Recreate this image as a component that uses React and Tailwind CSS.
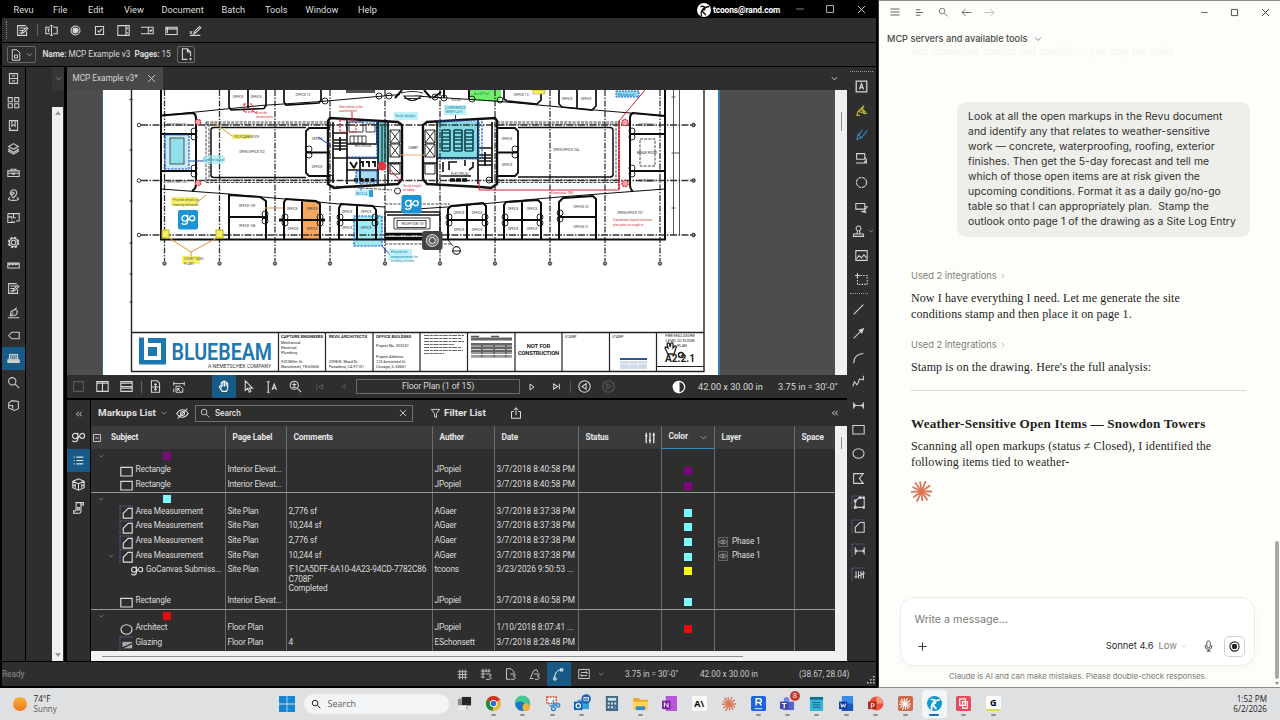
import clsx from "clsx";

// 16x16 line icons used across the Revu window
const ICONS = {
  markup: <path d="M13 9v5H2V2h10M4 5h7M4 8h5M4 11h3M7 11.5l1-2.5 5-5 1.5 1.5-5 5z" />,
  textField: <path d="M6 4H1v8h5M10 4h5v8h-5M8 2v12M6.5 2h3M6.5 14h3M3 6.5h3M4.5 6.5V10" />,
  radio: (
    <>
      <circle cx="8" cy="8" r="5.5" />
      <circle cx="8" cy="8" r="3" fill="currentColor" />
    </>
  ),
  check: <path d="M3 3h10v10H3zM5.5 8l2 2 3.5-4" />,
  listBox: <path d="M1 2h14v12H1zM11 2v12M12 5h2M12 11h2M12.5 5v1.5M12.5 10v1" />,
  combo: <path d="M0 4h15v8H9V4M0 12h9M10.5 7l1.5 2 1.7-2" />,
  button: <path d="M1 4h14v9H1zM3 4v7M1 6h14" />,
  sign: <path d="M1 14h13M6 12l1-3 6-6 1.5 1.5-6 6zM1 9l3 3M4 9l-3 3" />,
  cabinet: <path d="M3 2h10v12H3zM3 8h10M6 5h4M6 11h4" />,
  grid: <path d="M1.500 2h5v5h-5zM9.500 2h5v5h-5zM1.500 9.500h5v5h-5zM9.500 9.500h5v5h-5z" />,
  bookmark: <path d="M3 2h10v12H3zM6 2v7l2-2 2 2V2M3 12h2" />,
  layers: <path d="M8 2l6 3.5L8 9 2 5.5zM3 8l-1 1 6 4 6-4-1-1M4.5 10.5L2 11.5 8 15l6-3.5-2-1" />,
  toolbox: <path d="M1 6h14v7H1zM5 6V4h6v2M1 9h14M7 8v2h2V8" />,
  pin: <path d="M8 11C5 8 4 6.5 4 5a4 4 0 018 0c0 1.5-1 3-4 6zM8 4a1.5 1.5 0 100 2.5A1.5 1.5 0 008 4M4 10c-5 3 0 4 4 4s9-1 4-4" />,
  plan: <path d="M1 2h14v9h-4M1 2v11h5v-3M1 6h5v3M8 2v5h3M15 11v-3M6 13h3v-2" />,
  gear: (
    <>
      <circle cx="8" cy="8" r="6" strokeDasharray="2.9 1.8" strokeWidth="2.2" />
      <circle cx="8" cy="8" r="5" />
      <circle cx="8" cy="8" r="2.8" />
    </>
  ),
  ruler: <path d="M1 5h14v6H1zM3 5v3M5 5v2M7 5v3M9 5v2M11 5v3M13 5v2M1 6.5h14" />,
  pen: <path d="M1 14.5h14M4 12l1-5 5-3 3 3-2 4-5 1zM10 4l2-2M4 12l4-4" />,
  tag: <path d="M2 8l4-4h9v8H6z" />,
  stack: (
    <>
      <path d="M3 9V3h10v6M5 9V5h6v4M1 9h14M7 7h2" />
      <path d="M1 10h14v3H1z" fill="currentColor" />
    </>
  ),
  search: <path d="M6.5 2a4.5 4.5 0 100 9 4.500 4.500 0 000-9zM10 10l5 5" />,
  cube: <path d="M2 5l4-3 8 1v9l-5 2-7-3zM2 8h5v4" />,
  textBox: <path d="M1.5 1.5h13v13h-13zM5.5 11.5L8 4.5l2.5 7M6 9.5h4" strokeWidth="1.600" />,
  highlight: <path d="M2 14l2-5 7-7M4 9l8 3 3-1M11 2L9 6l4 4M6 6l6 5M2 14h4" />,
  pencil: <path d="M2 14l2-6 4-4M4 8l4 4 7-9M5 8c2-3 3-4 4-6M2 14l6-2" />,
  callout: <path d="M2 2h10v7H2zM12 6l2 3v4M1 13.5h14M11 13l3-3" />,
  cloud: <circle cx="8" cy="8" r="6.2" strokeDasharray="4 .85" />,
  callout2: <path d="M1 3h11v7H1zM12 7h3l-4 6M9 13l3-1 1 2z" />,
  stamp: <path d="M1 14h14M2 11h12v3H2zM6 11l1-4a3 3 0 112 0l1 4" />,
  image: <path d="M1 2h14v12H1zM2 12l3-4 3 3 3-4 3 4" />,
  snapshot: (
    <>
      <path d="M3 3h12v11H3z" strokeDasharray="2 1.5" />
      <path d="M3 0v6M0 3h6" />
    </>
  ),
  line: <path d="M2 14L14 2" />,
  arrow: <path d="M2 14L14 2M14 2l-5 2 3 3z" fill="currentColor" />,
  arc: <path d="M2 15C2 8 7 3 14 3" />,
  poly: <path d="M1 14l2-6 3 4 2-3 1-4 5 1V1" />,
  dim: <path d="M2 4v8M14 4v8M2 8h12M4 6L2 8l2 2M12 6l2 2-2 2" />,
  rect: <path d="M1 3h14v10.500H1z" />,
  ellipse: <ellipse cx="8" cy="8" rx="6.800" ry="5.800" />,
  polygon: <path d="M2 2h12L9 8l5 6H2z" />,
  perimeter: (
    <>
      <path d="M4 6v8h11V2H9L4 6" />
      <path d="M3 5h2v2H3zM9 1h2v2H9zM14 1h1v2h-1zM3 13h2v2H3zM14 13h1v2h-1z" fill="currentColor" />
      <path d="M0 0v16M0 0h16" stroke="#6b5fa0" strokeDasharray="1.5 1" />
    </>
  ),
  area: (
    <>
      <path d="M4 15V9l6-6h5v12z" />
      <path d="M0 0v16M0 0h16" stroke="#6b5fa0" strokeDasharray="1.5 1" />
    </>
  ),
  length: (
    <>
      <path d="M4 4v9M15 4v9M4 8.500h11M6 7L4 8.500 6 10M13 7l2 1.500-2 1.500" />
      <path d="M0 0v16M0 0h16" stroke="#6b5fa0" strokeDasharray="1.5 1" />
    </>
  ),
  count: (
    <>
      <path d="M5 4v9M8 4v9M11 4v9M14 4v9M3 11l13-5" />
      <path d="M0 0v16M0 0h16" stroke="#6b5fa0" strokeDasharray="1.5 1" />
    </>
  ),
  single: <path d="M2 2h12v12H2z" />,
  splitV: <path d="M1 2h14v12H1zM8 2v12M1 4h14" />,
  splitH: <path d="M1 2h14v12H1zM1 8h14M1 4h14M1 10h14" />,
  fitPage: <path d="M3 1h7l3 3v11H3zM8 4v9M4 8.5h8M6.5 6L8 4.500 9.500 6M6.500 11L8 12.500 9.500 11" />,
  fitWidth: <path d="M1 1v5M15 1v5M1 3.500h14M4 7h6l3 3v5H4zM1 10v5M6 10l4 4M6 13v-3h3" />,
  hand: <path d="M5 14L2 9c-1-2 1-2 2-.5V4c0-1.5 1.800-1.5 2 0V2.500c0-1.500 2-1.500 2 0V3c0-1.500 2-1.500 2 0v2c0-1.500 2-1.500 2 0v5l-1.500 4zM6 4v4M8 3v5M10 4v4" />,
  cursor: <path d="M4 1v12l3-3 2 5 2-1-2-4h4z" />,
  textSelect: <path d="M1 1h4M3 1v14M1 15h4M8 12l3-8 3 8M9 9.500h4" strokeWidth="1.500" />,
  zoom: <path d="M6.500 1.500a5 5 0 100 10 5 5 0 000-10zM10 10l5 5M4 5.500h5M6.500 3v5M4 9h5" />,
  first: <path d="M3 3v10M12 4l-6 4 6 4z" />,
  prev: <path d="M11 4L5 8l6 4z" />,
  next: <path d="M4 2l8 6-8 6z" />,
  last: <path d="M3 3.500l7 4.500-7 4.500zM13 3v10" />,
  back: <path d="M8 1a7 7 0 100 14A7 7 0 008 1zM10 4.500L5 8l5 3.500z" />,
  fwd: <path d="M8 1a7 7 0 100 14A7 7 0 008 1zM6 4.500L11 8l-5 3.500z" />,
  contrast: (
    <>
      <circle cx="8" cy="8" r="6.500" />
      <path d="M8 1.500a6.500 6.500 0 000 13z" fill="currentColor" />
    </>
  ),
  hide: <path d="M1 8c4-6 10-6 14 0-4 6-10 6-14 0zM8 5.500a2.500 2.500 0 100 5 2.500 2.500 0 000-5M2 14L14 2" />,
  eye: (
    <>
      <path d="M1 1h14v14H1z" strokeWidth=".8" />
      <path d="M2 8c3-4 9-4 12 0-3 4-9 4-12 0z" />
      <circle cx="8" cy="8" r="1.500" />
    </>
  ),
  close: <path d="M3 3l10 10M13 3L3 13" />,
  down: <path d="M2 5l6 6 6-6" />,
  funnel: <path d="M2 2h12L9.500 8v6l-3-1.500V8z" />,
  share: <path d="M5 6H2v9h12V6h-3M8 11V1M5 4l3-3 3 3" />,
  collapse: <path d="M7.500 3.500L3 8l4.500 4.500M13.500 3.500L9 8l4.500 4.500" strokeWidth="1.800" />,
  list: <path d="M5 3h10M5 8h10M5 13h10M1 3h1.500M1 8h1.500M1 13h1.500" />,
  box3d: <path d="M1 4l7-3 7 3v8l-7 3-7-3zM1 4l7 3 7-3M8 7v8M4 7v5M12 7v5M1 9h3M12 9h3" />,
  scroll: <path d="M5 2h9v3h-3v8c0 2-2 2-2 2H2v-3h3zM7 8h2v3H7zM11 5V2" />,
  minusBox: <path d="M1 1h14v14H1zM4.500 8h7" strokeWidth="1.600" />,
  sliders: <path d="M3 1v14M8 1v14M13 1v14M1.500 5h3M6.500 11h3M11.500 4h3" strokeWidth="1.800" />,
  hash: <path d="M1 4h14M1 8h14M1 12h14M4 1v14M8 1v14M12 1v14" />,
  snapGrid: <path d="M1 4h13M1 8h6M1 12h5M4 1v13M8 1v5M12 1v5M8 8h5c3 0 2 3-1 3 3 0 4 4 0 4H8" />,
  snapPage: <path d="M7 15H2V1h6l4 4v2M7 8h5c3 0 2 3-1 3 3 0 4 4 0 4H8" />,
  snapMark: <path d="M1 14h5M2 13L6 4l4-2 2 4M7 8h5c3 0 2 3-1 3 3 0 4 4 0 4H8" />,
  curve: <path d="M1 13h3v3H1zM2 12C3 6 6 3 11 2M10 1h3v3h-3z" />,
  sync: <path d="M1 2h14v12H1zM4 6h8l-2-2M12 6v2M12 10H4l2 2M4 10V8" />,
  docPage: <path d="M3 1h6l4 4v10H3zM6 8h4v4H6z" />,
  addPage: <path d="M9 14H3V1h6l4 4v5M9 1v4h4M13 12v3M11.500 13.500h3" />,
  glazing: (
    <>
      <path d="M3 6h12v8H3z" fill="#aaa" stroke="none" />
      <path d="M2 14L15 8" stroke="#222" />
      <path d="M0 0v16M0 0h16" stroke="#6b5fa0" strokeDasharray="1.5 1" />
    </>
  ),
  min: <path d="M2 8h12" />,
  max: <path d="M2.500 2.500h11v11h-11z" />,
};

function Icon({ name, className, sw = 1.3 }) {
  return (
    <svg
      viewBox="0 0 16 16"
      className={clsx("shrink-0 overflow-visible", className)}
      fill="none"
      stroke="currentColor"
      strokeWidth={sw}
    >
      {ICONS[name]}
    </svg>
  );
}

const GO_PATH =
  "M8.2 2v7.5c0 4.5-6 4.5-6.5 2M8.2 5.5a3.3 3.3 0 10-.2 2C9.5 10 10.2 3 13.5 3a3 3 0 110 6c-2 0-2.6-1.4-3.4-2.5";

function GoMark({ className, sw = 1.6 }) {
  return (
    <svg viewBox="0 0 18 16" className={className} fill="none" stroke="currentColor" strokeWidth={sw}>
      <path d={GO_PATH} />
    </svg>
  );
}

const MENU = [
  ["Revu", "w-[39.5px]"],
  ["File", "w-[35px]"],
  ["Edit", "w-[36px]"],
  ["View", "w-[37.5px]"],
  ["Document", "w-[60px]"],
  ["Batch", "w-[43.5px]"],
  ["Tools", "w-[40.5px]"],
  ["Window", "w-[52.5px]"],
  ["Help", "w-[30px]"],
];

function MenuBar() {
  return (
    <div className="flex h-[18px] shrink-0 items-center bg-black pl-[13.5px] text-[9.2px] text-[#dedede]">
      {MENU.map(([label, width]) => (
        <span key={label} className={clsx("mt-[1.5px]", width)}>
          {label}
        </span>
      ))}
      <div className="ml-[309px] flex items-center">
        <svg viewBox="0 0 16 16" className="mt-px size-[14px]">
          <circle cx="8" cy="8" r="8" fill="#fff" />
          <path d="M5 15c-1-6 1-10 9-11M4 4c4-1 6 1 5 3s-3 1-3 2 3 3 4 5" fill="none" stroke="#111" strokeWidth="1.6" />
        </svg>
        <span className="ml-[2px] mt-[2px] w-[67px] whitespace-nowrap text-[8.4px] font-bold tracking-[-0.1px] text-white">
          tcoons@rand.com
        </span>
        <Icon name="min" className="ml-[15px] size-[10px]" sw={1} />
        <Icon name="max" className="ml-[20px] size-[10px]" />
        <Icon name="close" className="ml-[21px] size-[11px]" />
      </div>
    </div>
  );
}

function FormToolbar() {
  const tools = ["textField", "radio", "check", "listBox", "combo", "button", "sign"];
  return (
    <div className="flex h-[24px] shrink-0 items-center bg-[#2e2e2e] pl-[4px] text-[#d6d6d6]">
      <div className="h-[18px] w-0 border-l border-dotted border-[#8a8a8a]" />
      <Icon name="markup" className="ml-[9px] size-[13px]" />
      <div className="ml-[8px] h-[12px] w-px bg-[#666]" />
      <div className="ml-[1.5px] flex">
        {tools.map((t) => (
          <div key={t} className="flex w-[24px] justify-center">
            <Icon name={t} className="size-[13px]" />
          </div>
        ))}
      </div>
    </div>
  );
}

function NameBar() {
  return (
    <div className="mt-px flex h-[23px] shrink-0 items-center bg-[#2e2e2e] pl-[5px] text-[8.3px] text-[#d8d8d8]">
      <div className="flex h-[17px] w-[29px] items-center justify-between rounded-[2px] border border-[#696969] px-[2px]">
        <Icon name="docPage" className="size-[12px]" />
        <Icon name="down" className="size-[7px]" />
      </div>
      <span className="ml-[6.5px] w-[92px] whitespace-nowrap tracking-[-0.05px]">
        <b>Name:</b> MCP Example v3
      </span>
      <span className="w-[42.5px] whitespace-nowrap tracking-[-0.1px]">
        <b>Pages:</b> 15
      </span>
      <div className="flex h-[17px] w-[18px] items-center justify-center rounded-[2px] border border-[#696969]">
        <Icon name="addPage" className="size-[13px]" />
      </div>
    </div>
  );
}

function LeftRail() {
  const items = [
    "cabinet", "grid", "bookmark", "layers", "toolbox", "pin", "plan", "gear",
    "ruler", "markup", "pen", "tag", "stack", "search", "cube",
  ];
  return (
    <div className="flex w-[23px] shrink-0 flex-col bg-[#2e2e2e] text-[#cfcfcf]">
      {items.map((n) => (
        <div
          key={n}
          className={clsx("flex h-[23.35px] shrink-0 items-center justify-center", n === "stack" && "bg-[#175a85]")}
        >
          <Icon name={n} className="size-[13px]" />
        </div>
      ))}
    </div>
  );
}

function SidePanel() {
  return (
    <div className="ml-px flex w-[38px] shrink-0 bg-[#2e2e2e]">
      <div className="w-[26px]" />
      <div className="flex w-[12px] flex-col">
        <div className="flex h-[23px] items-center justify-center bg-[#363636] text-[#bbb]">
          <Icon name="down" className="size-[7px]" />
        </div>
        <div className="mt-[17px] flex w-[11px] grow flex-col items-center justify-between bg-[#f0f0f0] py-1">
          <div className="size-0 border-x-[3px] border-b-[4px] border-x-transparent border-b-[#9a9a9a]" />
          <div className="size-0 border-x-[3px] border-t-[4px] border-x-transparent border-t-[#9a9a9a]" />
        </div>
      </div>
    </div>
  );
}

const GRID_X = [164.5, 219.5, 275, 330, 385, 440, 495, 550, 605, 660];
const DOORS = [
  [194, 131], [194, 137], [194, 168], [194, 174], [265, 214], [265, 221], [285, 217], [285, 223],
  [320, 217], [320, 223], [340, 217], [340, 223], [375, 217], [375, 223], [309, 149], [309, 155],
  [449, 217], [449, 223], [485, 217], [485, 223], [505, 217], [505, 223], [540, 217], [540, 223],
  [560, 213], [560, 219], [515, 149], [515, 155], [632, 131], [632, 137], [632, 168], [632, 174],
  [325, 101], [379, 96], [389, 96], [435, 97], [444, 98], [472, 99], [500, 100], [330, 178], [489, 180],
];
const LABELS = [
  [177, 126, "MEETING 101"], [177, 183, "MEETING 103"], [252, 153, "OPEN OFFICE 102"], [317, 140, "OFFICE"],
  [317, 168, "OFFICE"], [247, 207, "OFFICE 109"], [247, 227, "OFFICE 108"], [292, 210, "OFFICE"],
  [312, 210, "OFFICE"], [293, 230, "OFFICE"], [312, 230, "OFFICE"], [347, 213, "OFFICE"],
  [366, 213, "OFFICE"], [347, 229, "OFFICE"], [366, 229, "OFFICE"], [238, 98, "OFFICE"],
  [256, 98, "OFFICE"], [303, 96, "OFFICE 12"], [413, 149, "LOBBY"], [507, 140, "OFFICE"],
  [507, 166, "OFFICE"], [566, 151, "OPEN OFFICE 104"], [647, 154, "BREAK ROOM"], [647, 126, "STORAGE 2"],
  [647, 182, "STORAGE 3"], [630, 214, "OPEN OFFICE 107"], [581, 208, "OFFICE 20"], [581, 228, "OFFICE 21"],
  [459, 214, "OFFICE"], [477, 214, "OFFICE"], [459, 231, "OFFICE"], [477, 231, "OFFICE"], [513, 210, "OFFICE"],
  [532, 210, "OFFICE"], [513, 230, "OFFICE"], [532, 230, "OFFICE"], [521, 96, "OFFICE 13"], [567, 100, "OFFICE"],
  [586, 100, "OFFICE"], [456, 101, "ROOM"], [460, 175, "ELECTRICAL"], [363, 147, "RESTROOM"],
];

// lines of markup notes: x, y, colour, text
const NOTES = [
  [234, 138, "#555", "POLYCARB ROOF"],
  [173, 201, "#555", "Provide details on"],
  [173, 205.5, "#555", "framing elevation"],
  [184, 260, "#555", "COURT YARD"],
  [184, 264.5, "#555", "PLANT"],
  [256, 113.5, "#d4303c", "Provide"],
  [256, 118, "#d4303c", "dimensions"],
  [339, 107.5, "#d4303c", "Stair detail to be"],
  [339, 112, "#d4303c", "coordinated"],
  [203, 161, "#17829c", "Confirm layout"],
  [445, 108.5, "#17829c", "CONFERENCE"],
  [445, 113, "#17829c", "VERIFY A/V"],
  [395, 117, "#17829c", "Verify skylight"],
  [356, 195, "#1672b4", "RFI 014"],
  [618, 95.5, "#1672b4", "Waterproof"],
  [391, 253, "#17829c", "Provide fixt"],
  [391, 257.5, "#17829c", "measurements for"],
  [391, 262, "#17829c", "existing counter"],
  [403, 186.5, "#d4303c", "Verify height"],
  [403, 191, "#d4303c", "at lobby"],
  [551, 194, "#d4303c", "Dimension TBD"],
  [613, 221, "#d4303c", "Coordinate layout furniture"],
  [613, 225.5, "#d4303c", "plan prior to rough-in"],
  [474, 94.5, "#17722a", "A = 377 sf"],
];

function Core() {
  return (
    <g fill="none" stroke="#111" strokeWidth="1">
      <path d="M328 121l2-3 68 4 4 3v54l-4 5-54 3-10 1-6-4z" strokeWidth="2.4" />
      <path d="M333 122v61M347 118v66M378 120v65M388 122v62M333 133h14M347 144h30v-22M333 158h45M360 158v22M347 170h31M388 163h14" strokeWidth="1.7" />
      <path d="M349 122h14v10h-14zM366 124h9v8h-9zM350 136h16v7h-16zM354 136v7M358 136v7M362 136v7" strokeWidth=".8" />
      <path d="M334 140h12M334 143h12M334 146h12M334 149h12M340 137v14" strokeWidth="1.7" />
      <path d="M390 130h10v13h-10zl10 13M400 130l-10 13M390 144h10v13h-10zl10 13M400 144l-10 13M390 164h10v10h-10zl10 10" strokeWidth=".9" />
      <path d="M360 162h3v5M366 162h3v5M372 162h3v5M350 162l4 6M357 162l-3 6" strokeWidth="1.8" />
      <path d="M354 180h22" strokeWidth="3.4" strokeDasharray="4 1.5" />
      <path d="M382 124v38M385 124v38" strokeWidth="1.4" stroke="#1f4c50" />
    </g>
  );
}

function FloorPlan() {
  return (
    <svg viewBox="103 90 615 285" className="h-[285px] w-[615px] shrink-0 bg-white" fontFamily="Roboto, sans-serif">
      {/* sheet frame */}
      <g fill="none" stroke="#222">
        <path d="M131.5 90v281.5H704V90M131.5 332.5H704" strokeWidth="1.4" />
        <path d="M129.5 99.5h3M129.5 150h3M129.5 201h3M129.5 243h3M129.5 274h3M129.5 302h3" strokeWidth="1" />
        <path d="M673.5 90v145M679.5 90v145M671.500 97h4M671.500 153h8M671.500 208h4" stroke="#555" strokeWidth="1" />
      </g>

      {/* fills under the linework */}
      <rect x="165" y="135" width="24" height="34" fill="#c4ecf7" />
      <rect x="170" y="138" width="14" height="26" fill="#8fe0ea" />
      <rect x="303" y="201" width="17" height="38" fill="#f4a860" />
      <rect x="354" y="216" width="28" height="30" fill="#7fe3f0" opacity=".75" />
      <rect x="438" y="122" width="40" height="36" fill="#7fdbe6" />
      <path d="M378 121h10v42h-10z" fill="#6fc5c8" />
      <path d="M469 90h32v8l-4 4-26-2z" fill="#6ff06c" />
      <rect x="356" y="171" width="21" height="12" fill="#a6dcf7" />

      {/* column grid */}
      <g stroke="#333" fill="none">
        {GRID_X.map((x) => (
          <g key={x}>
            <path d={`M${x} 90V261`} strokeDasharray="6 1.5 1.5 1.5" strokeWidth="1.3" />
            <circle cx={x} cy="263.5" r="1.7" fill="#999" />
          </g>
        ))}
        {[125, 180.5, 235].map((y) => (
          <g key={y}>
            <path d={`M141 ${y}H692`} strokeDasharray="7 1.5 1.5 1.5" strokeWidth="1.3" />
            <circle cx="139" cy={y} r="1.8" />
            <circle cx="693.5" cy={y} r="1.8" fill="#777" />
          </g>
        ))}
      </g>

      {/* exterior and party walls */}
      <g fill="none" stroke="#0c0c0c" strokeWidth="2">
        <path d="M161 90v149.5h504V90" />
        <path d="M161 115.5l32-2.5q3 1 3 5v66q0 5-4 7M161 134h34M161 171h35" />
        <path d="M665 116l-32-3q-3 1-3 5v66q0 6 3 7M665 134h-34M665 171h-35" />
        <path d="M161 189l68 5 56 5 54 5 46 3M665 189l-106 8-56 5-56 5-46 3M161 115.5l100-10 60-4 79-7M665 116l-105-9-65-6-80-5" strokeWidth="1" />
        <path d="M229 90v17l2 3 33-1.5 2-3V90M248 90v18" strokeWidth="1.7" />
        <path d="M284 90v12l2 3 33-2 2-3V90" strokeWidth="1.7" />
        <path d="M559 90v14l3 3 30 3 4-4V90M577 90v18" strokeWidth="1.7" />
        <path d="M504 90v9l3 2 30 3 4-4V90" strokeWidth="1.7" />
        <path d="M433 98l8-6M444 90v8M469 90v9M395 98l7-8M424 90l7 8" />
        <path d="M211 130q0-2.5 3-2.5h92M211 130v45q0 2.5 3 2.5h92" strokeWidth="1.5" />
        <path d="M330 128h-21l-3 3v42l3 3h21M306 152.5h24" strokeWidth="1.8" />
        <path d="M518 127.5h92q3 0 3 3v44q0 2.5-3 2.5h-92" strokeWidth="1.5" />
        <path d="M497 128h18l3 3v42l-3 3h-18M497 152.5h21" strokeWidth="1.8" />
        <path d="M229 239v-44l31 2 6 4v38M229 217h37" />
        <path d="M284 239v-37l2-3 30 2 4 3v35M302 200v39M284 220h36" />
        <path d="M339 239v-31l2-4 32 2 3 4v29M357 205v34M339 220h37" />
        <path d="M448 239v-30l3-3 32-3 3 3v33M467 205v34M448 220h38" />
        <path d="M504 239v-34l2-3 32-2 3 3v36M522 201v38M504 220h37" />
        <path d="M559 239v-37l4-4 30-2 3 3v40M559 217h37" />
        <path d="M385 239v-27h55v27M387 215h53" strokeWidth="1.3" />
        <path d="M385 234h37M385 238h37" strokeWidth="2.6" />
        <path d="M394 218h36v11h-36zM397 220.500h29v7h-29z" strokeWidth=".8" />
      </g>
      <g fill="none" stroke="#333" strokeWidth=".9" strokeDasharray="3 1.2">
        <path d="M206 122h124M206 124h124M206 182.5h124M206 180h124M206 122v60M209 124v57M497 122h122M497 124h122M497 182.5h122M497 180h122M619 122v60M616 124v57" />
        <path d="M332 186l60 4M385 204h65M385 244h67M640 139h15v27h-15z" />
      </g>
      <rect x="170" y="138" width="14" height="26" fill="none" stroke="#333" strokeWidth=".8" />
      <path d="M346 90h29v3h-29z" fill="#555" />
      <path d="M404 96q8 9 17 0z" fill="#fff" stroke="#222" strokeWidth="1.2" />
      <path d="M404 98.500h17M401 93q12-3 22 0" fill="none" stroke="#222" strokeWidth="1.2" />

      <Core />
      {/* the east core is the west one mirrored, with its own fittings */}
      <g transform="translate(825 0) scale(-1 1)">
        <g fill="none" stroke="#111" strokeWidth="1">
          <path d="M328 121l2-3 68 4 4 3v54l-4 5-54 3-10 1-6-4z" strokeWidth="2.4" />
          <path d="M333 122v61M347 118v66M388 122v62M333 148h14M347 158h41M333 165h14M388 163h14" strokeWidth="1.7" />
          <path d="M390 130h10v13h-10zl10 13M400 130l-10 13M390 144h10v13h-10zl10 13M400 144l-10 13M390 164h10v10h-10z" strokeWidth=".9" />
          <path d="M334 155h12M334 158h12M334 161h12M340 152v14" strokeWidth="1.7" />
          <path d="M352 162v5l4 3M360 160v6M368 162h8v8M382 162v10M384 176h-30" strokeWidth="1.6" />
          <path d="M358 180h18" strokeWidth="3.4" strokeDasharray="5 1" />
        </g>
      </g>
      {/* conference seating */}
      <g stroke="#174a52" strokeWidth="1.7" fill="none">
        {[442, 454, 465].map((x) => (
          <path key={x} d={`M${x} 130h8M${x} 133h8M${x} 137h8M${x} 140h8M${x} 144h8M${x} 148h8M${x} 151h8M${x} 130v21M${x + 8} 130v21`} />
        ))}
      </g>

      <g fill="none" stroke="#111" strokeWidth=".9">
        {DOORS.map(([x, y]) => (
          <circle key={`${x}-${y}`} cx={x} cy={y} r="3" />
        ))}
        <path d="M262 217.5h6M284 220h-5M320 220h5" strokeWidth="3" />
      </g>

      <g fontSize="3.2" textAnchor="middle" fill="#333">
        {LABELS.map(([x, y, t]) => (
          <text key={`${x}-${y}`} x={x} y={y}>{t}</text>
        ))}
        <text x="413" y="225">RECEPTION 101</text>
      </g>

      {/* markups */}
      <g fill="none" stroke="#1f5fd0" strokeWidth="1.2" strokeDasharray="2.5 1">
        <rect x="165" y="135" width="24" height="34" />
        <rect x="354" y="216" width="28" height="30" />
        <path d="M348 122h29v35h-29M438 121h41v38h-41M482 121v38" />
        <rect x="356" y="171" width="21" height="12" />
      </g>
      <g fill="none" stroke="#d4202f" strokeWidth="1.1">
        <circle cx="198" cy="122" r="2.8" fill="#f5a3a8" strokeDasharray="2 .8" />
        <circle cx="198" cy="183" r="2.8" fill="#f5a3a8" strokeDasharray="2 .8" />
        <circle cx="625" cy="122.5" r="3.2" fill="#f5a3a8" strokeDasharray="2 .8" />
        <circle cx="625" cy="183.5" r="3.2" fill="#f5a3a8" strokeDasharray="2 .8" />
        <path d="M645 90l-26 31v69H479v-10M352 112v9M252 110l5 4" strokeWidth="1" />
        <path d="M619 121v69" strokeDasharray="2 1" strokeWidth="1.8" />
        <path d="M244 104h8v8h-8z" strokeDasharray="2 1" />
        <path d="M340 120h16v12h-16zM388 168l14 14" strokeDasharray="2 1" />
      </g>
      <circle cx="382" cy="166" r="4.500" fill="#e43442" />
      <path d="M190 161h14" stroke="#1c4da0" strokeWidth="1" />
      <path d="M318 137l13 9M455.5 115v6M361 183v8M382 246l8 9" stroke="#2a34b8" strokeWidth="1" />
      <path d="M265 208h18" stroke="#e0a050" strokeWidth="1" />
      <path d="M400 155h24" stroke="#e8a860" strokeWidth=".9" />

      <g fill="#f5f06a">
        <rect x="232" y="134" width="20" height="5" />
        <rect x="171" y="197" width="27" height="9" />
        <rect x="182" y="256" width="18" height="8" />
        <rect x="162" y="230" width="7" height="8" stroke="#c9b400" />
        <rect x="216" y="230" width="7" height="8" stroke="#c9b400" />
        <rect x="533" y="90" width="12" height="4" stroke="#c9a400" strokeWidth=".6" />
      </g>
      <path d="M213 122l19 14M206 195l-10 8M169 238l22 14 26-14M191 252v4" fill="none" stroke="#d79b2c" strokeWidth="1" />
      <g fill="#9cebf5" opacity=".65">
        <rect x="203" y="155" width="22" height="9" rx="4" />
        <rect x="444" y="105" width="22" height="10" />
        <rect x="355" y="190" width="14" height="6" />
        <rect x="388" y="249" width="24" height="11" />
        <rect x="394" y="112" width="24" height="8" />
      </g>
      <rect x="616" y="91" width="23" height="6" fill="#8cd8f2" stroke="#2460c0" strokeDasharray="2 1" />
      <g fontSize="3.3">
        {NOTES.map(([x, y, fill, t]) => (
          <text key={t} x={x} y={y} fill={fill}>{t}</text>
        ))}
      </g>
      <path d="M369 190h4v7h-4z" fill="#2c9be0" />

      {/* GoCanvas and camera stamps */}
      {[[178, 210, 20, 19.5], [401.5, 195, 20, 18.5]].map(([x, y, w, h]) => (
        <g key={x}>
          <rect x={x} y={y} width={w} height={h} rx="2" fill="#1b93d4" />
          <path
            d={GO_PATH}
            transform={`translate(${x + 2.5} ${y + 3}) scale(.86)`}
            fill="none"
            stroke="#fff"
            strokeWidth="1.6"
          />
        </g>
      ))}
      <rect x="422" y="231" width="20.5" height="19" rx="3" fill="#444" />
      <circle cx="432.300" cy="240.5" r="6" fill="#777" stroke="#ddd" />
      <circle cx="432.300" cy="240.5" r="3" fill="#555" stroke="#eee" />
      <path d="M448 240l5 6M452 251h9" stroke="#222" />
      <circle cx="456.5" cy="250.5" r="3.8" fill="none" stroke="#222" strokeWidth="1.2" />
      <circle cx="397.5" cy="191" r="3" fill="none" stroke="#222" />

      {/* title block */}
      <path
        d="M278.5 332.500v39M325.500 332.500v39M373 332.500v39M420 332.500v39M467.500 332.500v39M515 332.500v39M562 332.500v39M609.500 332.500v39M656.500 332.500v39M656.500 366.500H704"
        stroke="#222"
        strokeWidth="1.2"
      />
      <g fill="#1c78b0">
        <path d="M139 337.5h5V360h17v-17h-13v-5h18v26.5h-27z" />
        <path d="M148 347h9v9h-9z" />
      </g>
      <text x="171.500" y="360" fontSize="23.500" fontWeight="600" fill="#1c78b0" textLength="100.500" lengthAdjust="spacingAndGlyphs">
        BLUEBEAM
      </text>
      <text x="208" y="367.5" fontSize="4.500" fill="#333" textLength="63" lengthAdjust="spacingAndGlyphs">
        A NEMETSCHEK COMPANY
      </text>
      <g fontSize="3.800" fill="#222">
        <text x="281" y="338" fontWeight="700" textLength="42" fontSize="4.2">CAPTURE ENGINEERS</text>
        <text x="281" y="343.5">Mechanical</text>
        <text x="281" y="348.5">Electrical</text>
        <text x="281" y="353.5">Plumbing</text>
        <text x="281" y="362.5">920 Miller St.</text>
        <text x="281" y="367.5">Manchester, TN 60606</text>
        <text x="329" y="338" fontWeight="700" textLength="38" fontSize="4.2">REVU ARCHITECTS</text>
        <text x="329" y="362.5">2098 N. Wood Dr.</text>
        <text x="329" y="367.5">Pasadena, CA 91101</text>
        <text x="376" y="338" fontWeight="700" textLength="35" fontSize="4.2">OFFICE BUILDING</text>
        <text x="376" y="346.5">Project No. 333232</text>
        <text x="376" y="358">Project Address:</text>
        <text x="376" y="363">123 Armistead St.</text>
        <text x="376" y="368">Chicago, IL 60661</text>
        <text x="538.5" y="348" fontSize="5.800" fontWeight="700" textAnchor="middle">NOT FOR</text>
        <text x="538.5" y="355" fontSize="5.800" fontWeight="700" textAnchor="middle" textLength="41">CONSTRUCTION</text>
        <text x="565" y="338" fontSize="3.500">STAMP</text>
        <text x="612" y="338" fontSize="3.500">STAMP</text>
        <text x="680" y="336.5" textAnchor="middle">FIRE ENCLOSURE</text>
        <text x="680" y="341.5" textAnchor="middle">LEVEL 02 FLOOR</text>
        <text x="682" y="346.5" textAnchor="middle">PLAN</text>
        <text x="665" y="362" fontSize="11" fontWeight="700" textLength="30" lengthAdjust="spacingAndGlyphs">A2.2.1</text>
      </g>
      <path d="M424 335.5h40M424 338.5h38M424 341.5h40M424 344.5h30M424 347.5h38M424 350.5h39M424 353.5h20" stroke="#555" strokeWidth=".9" strokeDasharray="5 .8 3 .6" />
      <path d="M471 336.5h39" stroke="#555" strokeWidth="1.5" strokeDasharray="8 12" />
      <path d="M471 337.5h41v3h-41zM471 343h41v11h-41zM471 355h41v2.5h-41z" fill="#666" />
      <path d="M471 346h41M471 349.5h41M471 353h41M471 356h41" stroke="#eee" strokeWidth=".8" strokeDasharray="10 2" />
      <path d="M620 358h27v2h-27z" fill="#2c5793" />
      <path d="M620 361h27v8h-27z" fill="#cddbea" />
      <path d="M629 361v8M638 361v8M620 364h27" stroke="#fff" strokeWidth=".6" />
      {/* hand cursor */}
      <path d="M668 354l-3-6q0-2 3 0l-1-4q1-2 2.500 0l.5 3 1-4q2-1 2 1v4l2-2q2 0 1 2l-2 6z" fill="#fff" stroke="#222" strokeWidth="1.3" />
      <circle cx="681" cy="355" r="2.500" fill="none" stroke="#222" strokeWidth="1.4" />
    </svg>
  );
}

function DocumentView() {
  return (
    <div className="flex h-[285px] shrink-0 bg-[#4d4d4d]">
      <div className="w-[36px] border-r border-[#3c6880]" />
      <FloorPlan />
      <div className="w-[2px] bg-[#2c7eb5]" />
      <div className="grow" />
      <div className="flex w-[12px] justify-center bg-[#f0f0f0] pt-[22px]">
        <div className="h-[19px] w-px bg-[#8b8b8b]" />
      </div>
    </div>
  );
}

function Tabs() {
  return (
    <div className="flex h-[23px] shrink-0 items-center bg-[#2e2e2e] text-[#d5d5d5]">
      <div className="flex h-full w-[95.5px] items-center bg-[#484848] pl-[5.5px] text-[8.3px]">
        <span className="w-[73.5px] whitespace-nowrap tracking-[-0.05px]">MCP Example v3*</span>
        <Icon name="close" className="size-[11px]" />
      </div>
      <Icon name="down" className="ml-auto mr-[9px] size-[7px]" sw={2.2} />
    </div>
  );
}

function Cell({ w, children, className }) {
  return <div className={clsx("flex h-full shrink-0 items-center justify-center", w, className)}>{children}</div>;
}

function ViewBar() {
  return (
    <div className="flex h-[23px] shrink-0 items-center bg-[#2e2e2e] text-[#d8d8d8]">
      <Cell w="w-[23px]" className="text-[#5a5a5a]"><Icon name="single" className="size-[13px]" /></Cell>
      <Cell w="w-[24px]"><Icon name="splitV" className="size-[13px]" /></Cell>
      <Cell w="w-[24px]"><Icon name="splitH" className="size-[13px]" /></Cell>
      <Cell w="w-[6px]"><div className="h-[12px] w-px bg-[#666]" /></Cell>
      <Cell w="w-[22px]"><Icon name="fitPage" className="size-[13px]" /></Cell>
      <Cell w="w-[26px]"><Icon name="fitWidth" className="size-[12px]" /></Cell>
      <Cell w="w-[20px]" />
      <Cell w="w-[24px]" className="bg-[#175a85] text-white"><Icon name="hand" className="size-[13px]" /></Cell>
      <Cell w="w-[24px]"><Icon name="cursor" className="size-[13px]" /></Cell>
      <Cell w="w-[23px]"><Icon name="textSelect" className="size-[12px]" /></Cell>
      <Cell w="w-[24px]"><Icon name="zoom" className="size-[13px]" /></Cell>
      <Cell w="w-[25px]" className="text-[#5f5f5f]"><Icon name="first" className="size-[10px]" /></Cell>
      <Cell w="w-[22px]" className="text-[#5f5f5f]"><Icon name="prev" className="size-[9px]" /></Cell>
      <div className="ml-[2px] flex h-[15px] w-[164px] items-center justify-center whitespace-nowrap border border-[#6a6a6a] text-[8.7px] tracking-[-0.1px]">
        Floor Plan (1 of 15)
      </div>
      <Cell w="w-[24px]"><Icon name="next" className="size-[8px]" sw={2} /></Cell>
      <Cell w="w-[24px]"><Icon name="last" className="size-[9px]" sw={1.8} /></Cell>
      <Cell w="w-[4px]"><div className="h-[12px] w-px bg-[#555]" /></Cell>
      <Cell w="w-[24px]"><Icon name="back" className="size-[13px]" /></Cell>
      <Cell w="w-[24px]" className="text-[#5a5a5a]"><Icon name="fwd" className="size-[13px]" /></Cell>
      <Icon name="contrast" className="ml-[52px] size-[14px] text-white" />
      <span className="ml-[12px] w-[80px] whitespace-nowrap text-[9.2px]">42.00 x 30.00 in</span>
      <span className="whitespace-nowrap text-[9.2px]">3.75 in = 30'-0"</span>
    </div>
  );
}

const CYAN = "bg-[#7df9f9]";
const PURPLE = "bg-[#7b0a7b]";
const RED = "bg-[#e60c0c]";

const GROUPS = [
  {
    color: PURPLE,
    rows: [
      { icon: "rect", subject: "Rectangle", page: "Interior Elevat...", author: "JPopiel", date: "3/7/2018 8:40:58 PM", color: PURPLE },
      { icon: "rect", subject: "Rectangle", page: "Interior Elevat...", author: "JPopiel", date: "3/7/2018 8:40:58 PM", color: PURPLE },
    ],
  },
  {
    color: CYAN,
    rows: [
      { icon: "area", subject: "Area Measurement", page: "Site Plan", comment: "2,776 sf", author: "AGaer", date: "3/7/2018 8:37:38 PM", color: CYAN },
      { icon: "area", subject: "Area Measurement", page: "Site Plan", comment: "10,244 sf", author: "AGaer", date: "3/7/2018 8:37:38 PM", color: CYAN },
      { icon: "area", subject: "Area Measurement", page: "Site Plan", comment: "2,776 sf", author: "AGaer", date: "3/7/2018 8:37:38 PM", color: CYAN, layer: "Phase 1" },
      { icon: "area", subject: "Area Measurement", page: "Site Plan", comment: "10,244 sf", author: "AGaer", date: "3/7/2018 8:37:38 PM", color: CYAN, layer: "Phase 1", open: true },
      { icon: "go", subject: "GoCanvas Submiss...", page: "Site Plan", comment: "'F1CA5DFF-6A10-4A23-94CD-7782C86\nC708F'\nCompleted", author: "tcoons", date: "3/23/2026 9:50:53 ...", color: "bg-[#fdf90c]", tall: true },
      { icon: "rect", subject: "Rectangle", page: "Interior Elevat...", author: "JPopiel", date: "3/7/2018 8:40:58 PM", color: CYAN },
    ],
  },
  {
    color: RED,
    rows: [
      { icon: "ellipse", subject: "Architect", page: "Floor Plan", author: "JPopiel", date: "1/10/2018 8:07:41 ...", color: RED },
      { icon: "glazing", subject: "Glazing", page: "Floor Plan", comment: "4", author: "ESchonsett", date: "3/7/2018 8:28:48 PM" },
    ],
  },
];

const COLS = "grid shrink-0 grid-cols-[135px_61px_146px_62px_84px_83px_53px_80px_40px]";
const LINE = "border-r border-[#6c6c6c] whitespace-nowrap overflow-hidden";
const TEXT_CELL = "pl-[1.5px] pt-[2px]";

function MarkupRow({ row }) {
  return (
    <div className={clsx(COLS, "leading-[9.4px]", row.tall ? "h-[30.7px]" : "h-[14.67px]")}>
      <div className={clsx(LINE, "flex pt-[2px]", row.tall ? "pl-[39px]" : "pl-[17px]")}>
        {!row.tall && (
          <div className="w-[12px] shrink-0 pt-[2px] text-[#bbb]">
            {row.open && <Icon name="down" className="size-[6px]" />}
          </div>
        )}
        {row.tall ? (
          <GoMark className="mr-[2px] h-[12px] w-[14px] shrink-0" />
        ) : (
          <Icon name={row.icon} className="-mt-[0.5px] mr-[2.5px] size-[13px]" sw={1.4} />
        )}
        <span>{row.subject}</span>
      </div>
      <div className={clsx(LINE, TEXT_CELL)}>{row.page}</div>
      <div className={clsx(LINE, TEXT_CELL, "whitespace-pre tracking-[-0.14px]")}>{row.comment}</div>
      <div className={clsx(LINE, TEXT_CELL)}>{row.author}</div>
      <div className={clsx(LINE, TEXT_CELL, "tracking-[-0.02px]")}>{row.date}</div>
      <div className={LINE} />
      <div className={clsx(LINE, "flex justify-center pt-[4px]")}>
        {row.color && <div className={clsx("size-[8px]", row.color)} />}
      </div>
      <div className={clsx(LINE, "flex pl-[3px] pt-[2.5px]")}>
        {row.layer && (
          <>
            <Icon name="eye" className="mr-[4px] size-[10px] text-[#aaa]" />
            {row.layer}
          </>
        )}
      </div>
      <div />
    </div>
  );
}

function MarkupGroup({ group, first }) {
  return (
    <div className={clsx("shrink-0", !first && "border-t border-[#979797]")}>
      <div className={clsx(COLS, first ? "h-[14px]" : "h-[11.5px]")}>
        <div className={clsx(LINE, "flex items-center")}>
          <Icon name="down" className="ml-[7px] size-[6px] text-[#bbb]" />
          <div className={clsx("ml-[59px] size-[8px]", group.color)} />
        </div>
        {[1, 2, 3, 4, 5, 6, 7].map((i) => (
          <div key={i} className={LINE} />
        ))}
      </div>
      {group.rows.map((row, i) => (
        <MarkupRow key={i} row={row} />
      ))}
    </div>
  );
}

function MarkupsTable() {
  const head = clsx(LINE, "flex items-center pb-px pl-[6.5px]");
  return (
    <div className="flex w-[744px] shrink-0 flex-col overflow-hidden">
      <div className={clsx(COLS, "h-[23px] bg-[#3b3b3b] text-[8.3px] font-bold tracking-[-0.15px] text-[#e6e6e6]")}>
        <div className={clsx(LINE, "flex items-center pb-px pl-[2px]")}>
          <Icon name="minusBox" className="mt-[2px] size-[8px]" />
          <span className="ml-[10px]">Subject</span>
        </div>
        <div className={head}>Page Label</div>
        <div className={head}>Comments</div>
        <div className={head}>Author</div>
        <div className={head}>Date</div>
        <div className={clsx(head, "justify-between pr-[5px]")}>
          Status
          <Icon name="sliders" className="mt-[2px] size-[12px]" />
        </div>
        <div className={clsx(head, "justify-between border-b border-b-[#2d8fc9] pr-[7px]")}>
          Color
          <Icon name="down" className="mt-[2px] size-[7px]" />
        </div>
        <div className={head}>Layer</div>
        <div className="flex items-center pb-px pl-[6.5px]">Space</div>
      </div>
      <div className="flex h-[202px] flex-col overflow-hidden bg-[#2e2e2e] text-[8.3px] tracking-[-0.16px] text-[#dcdcdc]">
        {GROUPS.map((g, i) => (
          <MarkupGroup key={i} group={g} first={i === 0} />
        ))}
      </div>
      <div className="flex grow items-center bg-[#f2f2f2] pl-[11px]">
        <div className="h-px w-[641px] bg-[#8e8e8e]" />
      </div>
    </div>
  );
}

function MarkupsPanel() {
  return (
    <div className="mt-[2px] flex h-[261px] shrink-0 bg-[#2e2e2e] text-[#e0e0e0]">
      <div className="flex w-[23px] shrink-0 flex-col pt-[2px]">
        <Cell w="w-full" className="!h-[23px]"><Icon name="collapse" className="size-[8px]" /></Cell>
        <Cell w="w-full" className="!h-[24px]"><GoMark className="h-[13px] w-[15px]" sw={1.4} /></Cell>
        <Cell w="w-full" className="!h-[23px] bg-[#175a85]"><Icon name="list" className="size-[11px]" sw={1.8} /></Cell>
        <Cell w="w-full" className="!h-[24px]"><Icon name="box3d" className="size-[13px]" /></Cell>
        <Cell w="w-full" className="!h-[23px]"><Icon name="scroll" className="size-[13px]" /></Cell>
      </div>
      <div className="w-px shrink-0 bg-black" />
      <div className="flex grow flex-col">
        <div className="flex h-[26px] shrink-0 items-center pl-[7px]">
          <span className="w-[63px] whitespace-nowrap text-[9.9px] font-bold">Markups List</span>
          <Icon name="down" className="size-[6px]" />
          <Icon name="hide" className="ml-[9px] size-[13px]" />
          <div className="ml-[6px] flex h-[17px] w-[218px] items-center border border-[#707070] pl-[4px] pr-[4px] text-[8.3px] font-medium">
            <Icon name="search" className="size-[10px]" />
            <span className="ml-[5px] grow">Search</span>
            <Icon name="close" className="size-[10px]" />
          </div>
          <Icon name="funnel" className="ml-[17px] size-[11px]" />
          <span className="ml-[3px] w-[66px] whitespace-nowrap text-[9.9px] font-bold">Filter List</span>
          <Icon name="share" className="size-[12px]" />
          <Icon name="collapse" className="ml-auto mr-[8px] size-[8px]" />
        </div>
        <div className="flex grow">
          <MarkupsTable />
          <div className="flex grow justify-center bg-[#f0f0f0] pt-[11px]">
            <div className="h-[12px] w-px bg-[#8b8b8b]" />
          </div>
        </div>
      </div>
    </div>
  );
}

function RightRail() {
  const top = ["textBox", "highlight", "pencil", "callout", "cloud", "callout2", "stamp", "image", "snapshot"];
  const bottom = ["line", "arrow", "arc", "poly", "dim", "rect", "ellipse", "polygon", "perimeter", "area", "length", "count"];
  return (
    <div className="flex w-[29px] shrink-0 flex-col bg-[#2e2e2e] pt-[4px] text-[#d2d2d2]">
      <div className="ml-[3px] w-[23px] border-t border-dotted border-[#999]" />
      <div className="mt-[2.500px]">
        {top.map((n) => (
          <div key={n} className="flex h-[24.1px] items-center pl-[8px]">
            <Icon
              name={n}
              className={clsx(
                "size-[13px]",
                n === "highlight" && "text-[#c9bd3a]",
                n === "pencil" && "text-[#2d8fc9]",
                n === "stamp" && "-ml-[3px]"
              )}
            />
            {n === "stamp" && <Icon name="down" className="ml-[3px] size-[6px]" />}
          </div>
        ))}
      </div>
      <div className="ml-[3px] mt-[2px] w-[18px] border-t border-dotted border-[#999]" />
      <div className="mt-[3px]">
        {bottom.map((n) => (
          <div key={n} className="flex h-[24.1px] items-center pl-[5px]">
            <Icon name={n} className="size-[13px]" />
          </div>
        ))}
      </div>
    </div>
  );
}

function StatusBar() {
  return (
    <div className="mt-px flex h-[24px] shrink-0 items-center bg-[#2e2e2e] text-[8.3px] tracking-[-0.05px] text-[#c9c9c9]">
      <span className="w-[448px] text-[#8d8d8d]">Ready</span>
      <Cell w="w-[24px]"><Icon name="hash" className="size-[11px]" /></Cell>
      <Cell w="w-[24.5px]"><Icon name="snapGrid" className="size-[12px]" /></Cell>
      <Cell w="w-[24.5px]"><Icon name="snapPage" className="size-[12px]" /></Cell>
      <Cell w="w-[24px]"><Icon name="snapMark" className="size-[12px]" /></Cell>
      <Cell w="w-[24px]" className="bg-[#175a85] text-white"><Icon name="curve" className="size-[12px]" /></Cell>
      <Cell w="w-[25px]"><Icon name="sync" className="size-[12px]" /></Cell>
      <Icon name="down" className="ml-[2px] size-[6px]" />
      <span className="ml-[21px] w-[75px] whitespace-nowrap">3.75 in = 30'-0"</span>
      <span className="w-[99px] whitespace-nowrap">42.00 x 30.00 in</span>
      <span className="whitespace-nowrap">(38.67, 28.04)</span>
      <svg viewBox="0 0 8 8" className="mb-[2px] ml-auto mr-[1px] size-[8px] self-end" fill="#ccc">
        <path d="M6 0h1.500v1.500H6zM6 3h1.500v1.500H6zM6 6h1.500v1.500H6zM3 3h1.500v1.500H3zM3 6h1.500v1.500H3zM0 6h1.500v1.500H0z" />
      </svg>
    </div>
  );
}

function RevuWindow() {
  return (
    <div className="flex w-[878px] shrink-0 flex-col bg-black pl-[2px] pr-[2px] font-['Roboto',sans-serif]">
      <div className="-ml-[2px]"><MenuBar /></div>
      <FormToolbar />
      <NameBar />
      <div className="mt-px flex h-[594px] shrink-0">
        <LeftRail />
        <SidePanel />
        <div className="ml-[3px] flex w-[780px] shrink-0 flex-col">
          <Tabs />
          <DocumentView />
          <ViewBar />
          <MarkupsPanel />
        </div>
        <RightRail />
      </div>
      <StatusBar />
    </div>
  );
}

const PROMPT = [
  "Look at all the open markups in the Revu document",
  "and identify any that relates to weather-sensitive",
  "work — concrete, waterproofing, roofing, exterior",
  "finishes. Then get the 5-day forecast and tell me",
  "which of those open items are at risk given the",
  "upcoming conditions. Format it as a daily go/no-go",
  "table so that I can appropriately plan.  Stamp the",
  "outlook onto page 1 of the drawing as a Site Log Entry",
];

const RAYS = [
  [0, 10], [28, 9], [55, 9.5], [85, 8.5], [115, 10], [145, 9], [178, 10], [207, 9], [235, 10], [262, 9], [292, 10], [325, 9.5],
];

function Burst({ className, color = "#d97757", width = 1.7 }) {
  return (
    <svg viewBox="-10 -10 20 20" className={className} stroke={color} strokeWidth={width} strokeLinecap="round">
      {RAYS.map(([a, r]) => (
        <path key={a} d={`M0 0H${r}`} transform={`rotate(${a})`} />
      ))}
    </svg>
  );
}

function Integrations() {
  return (
    <div className="flex h-[14px] items-center font-['Inter',sans-serif] text-[9.3px] tracking-normal text-[#7d7d78]">
      <span className="w-[89px] whitespace-nowrap">Used 2 integrations</span>
      <Icon name="down" className="size-[6px] -rotate-90" />
    </div>
  );
}

function ChatWindow() {
  return (
    <div className="flex w-[402px] shrink-0 flex-col border-b border-l border-t border-b-[#8c8c8c] border-l-[#333] border-t-[#8c8c8c] bg-[#fdfdf9] font-['Inter',sans-serif] text-[#2b2b29]">
      <div className="flex h-[22px] shrink-0 items-center pl-[11px] text-[#666]">
        <svg viewBox="0 0 10 10" className="size-[10px]" stroke="currentColor" strokeWidth="1.2">
          <path d="M.5 2h9M.5 5h9M.5 8h9" />
        </svg>
        <svg viewBox="0 0 10 10" className="ml-[15px] size-[9px]" stroke="currentColor" strokeWidth="1.2">
          <path d="M1 2h5M1 5h8M1 8h5" />
        </svg>
        <Icon name="search" className="ml-[14px] size-[10px]" />
        <svg viewBox="0 0 12 10" className="ml-[13px] h-[9px] w-[11px]" fill="none" stroke="currentColor">
          <path d="M11.5 5H1M5 1L1 5l4 4" />
        </svg>
        <svg viewBox="0 0 12 10" className="ml-[12px] h-[9px] w-[11px] text-[#bbb]" fill="none" stroke="currentColor">
          <path d="M.5 5H11M7 1l4 4-4 4" />
        </svg>
        <div className="ml-auto flex items-center pr-[9.5px] text-[#333]">
          <Icon name="min" className="size-[9px]" />
          <Icon name="max" className="ml-[21px] size-[9px]" sw={1.5} />
          <Icon name="close" className="ml-[21px] size-[11px]" />
        </div>
      </div>
      <div className="flex h-[32px] shrink-0 items-center pl-[8px] text-[9.2px] font-medium text-[#4a4a47]">
        <span className="w-[147px] whitespace-nowrap">MCP servers and available tools</span>
        <Icon name="down" className="size-[8px]" />
      </div>
      {/* last line of the previous reply, faded out under the header */}
      <div className="-mt-[10px] ml-[33px] h-[12px] whitespace-nowrap font-['Liberation_Serif',serif] text-[11.5px] leading-[12px] text-[#f5f5f1]">
        and immediate context and models — you may use tools
      </div>
      <div className="ml-[78px] mt-[44.5px] h-[135px] w-[293px] shrink-0 rounded-[9px] bg-[#eeeeea] pl-[11px] pt-[8.5px] text-[10.4px] leading-[14.95px] tracking-[0.06px] text-[#30302e]">
        {PROMPT.map((l) => (
          <p key={l} className="whitespace-pre">{l}</p>
        ))}
      </div>
      <div className="ml-[32px] mt-[32.5px] w-[335px] font-['Liberation_Serif',serif] text-[12px] leading-[16px] tracking-[0.1px] text-[#1e1e1b]">
        <Integrations />
        <div className="mt-[6.5px]">
          <p className="whitespace-nowrap">Now I have everything I need. Let me generate the site</p>
          <p className="whitespace-nowrap">conditions stamp and then place it on page 1.</p>
        </div>
        <div className="mt-[16px]"><Integrations /></div>
        <p className="mt-[7px]">Stamp is on the drawing. Here's the full analysis:</p>
        <div className="mt-[15px] h-[1.5px] bg-[#d9d9d4]" />
        <p className="mt-[25px] whitespace-nowrap text-[13.2px] font-bold tracking-[0.18px]">
          Weather-Sensitive Open Items — Snowdon Towers
        </p>
        <div className="mt-[6px] tracking-[0.15px]">
          <p className="whitespace-nowrap">Scanning all open markups (status ≠ Closed), I identified the</p>
          <p className="whitespace-nowrap">following items tied to weather-</p>
        </div>
        <Burst className="mt-[11px] size-[21px]" />
      </div>
      <div className="mt-auto flex shrink-0">
        <div className="ml-[21px] h-[69px] w-[355px] rounded-[14px] border border-[#ecece8] bg-white pl-[13.5px] pr-[14px] pt-[14px] shadow-[0_2px_8px_rgba(0,0,0,0.03)]">
          <div className="h-[15px] text-[10.7px] leading-[15px] text-[#7b7b76]">Write a message…</div>
          <div className="mt-[8px] flex h-[22px] items-center text-[9.4px]">
            <svg viewBox="0 0 10 10" className="ml-[3px] size-[9px]" stroke="#333" strokeWidth="1.1">
              <path d="M5 .5v9M.5 5h9" />
            </svg>
            <span className="ml-auto">Sonnet 4.6</span>
            <span className="ml-[5px] text-[#84847f]">Low</span>
            <Icon name="down" className="ml-[4px] size-[6px] text-[#aaa]" />
            <svg viewBox="0 0 12 14" className="ml-[16px] h-[12px] w-[11px]" fill="none" stroke="#444" strokeWidth="1.1">
              <path d="M6 1a2 2 0 00-2 2v4a2 2 0 004 0V3a2 2 0 00-2-2zM2 6v1a4 4 0 008 0V6M6 11v2M3.5 13h5" />
            </svg>
            <div className="-mr-[5px] ml-[10px] flex size-[21px] items-center justify-center rounded-[5px] border border-[#cfcfca]">
              <svg viewBox="0 0 12 12" className="size-[11px]" fill="none" stroke="#222" strokeWidth="1.2">
                <circle cx="6" cy="6" r="5" />
                <rect x="4" y="4" width="4" height="4" rx="1" fill="#222" />
              </svg>
            </div>
          </div>
        </div>
      </div>
      <div className="flex h-[21px] shrink-0 items-center justify-center pb-px pr-[3px] text-[8.1px] tracking-[-0.14px] text-[#80807b]">
        Claude is AI and can make mistakes. Please double-check responses.
      </div>
    </div>
  );
}

const TASKS = [
  { id: "view", body: <><path d="M5 1h10v9H5z" fill="#262626" /><path d="M1 3h4v7h6v4H1z" fill="#8d8d8d" /><path d="M1 10h9v5H1z" fill="#ececec" /></> },
  { id: "chrome", run: true, body: <><circle cx="8" cy="8" r="8" fill="#e8b93a" /><path d="M8 8L1 4a8 8 0 0114 0z" fill="#d93025" /><path d="M8 8L1 4a8 8 0 006 12z" fill="#1e8e3e" /><circle cx="8" cy="8" r="3.8" fill="#fff" /><circle cx="8" cy="8" r="2.9" fill="#2d6fe0" /></> },
  { id: "edge", run: true, body: <><circle cx="8" cy="8" r="8" fill="#1676c9" /><path d="M0 8a8 8 0 0116-1c0 4-6 4-6 2 1-3-6-5-10-1z" fill="#42c98f" /><circle cx="12" cy="12" r="4" fill="#f0b23a" /></> },
  { id: "snip", run: true, body: <><path d="M2 1h10v7H2z" fill="#f5f5f5" stroke="#d0482c" strokeDasharray="2 1" strokeWidth="1.5" /><path d="M9 4v7M13 9l-8 2" stroke="#3a94d0" strokeWidth="1.6" /><circle cx="9" cy="13.500" r="2" fill="none" stroke="#2f7fc0" strokeWidth="1.4" /><circle cx="14" cy="10" r="1.800" fill="none" stroke="#2f7fc0" strokeWidth="1.4" /></> },
  { id: "outlook", run: true, body: <><path d="M4 4h12v10H4z" fill="#3aa0e0" /><path d="M0 6h9v9H0z" fill="#0f63b8" /><circle cx="4.5" cy="10.5" r="2.3" fill="none" stroke="#fff" strokeWidth="1.3" /><circle cx="13" cy="3" r="5" fill="#1d5fa8" /><path d="M10.5 1.5h5V5h-5zl2.5 2 2.5-2" fill="none" stroke="#fff" strokeWidth=".8" /></> },
  { id: "calc", body: <><path d="M2 0h13v16H2z" fill="#46677f" /><path d="M4 2h9v3H4z" fill="#bfe5f5" /><path d="M4 7h2v2H4zM7.5 7h2v2h-2zM11 7h2v2h-2zM4 11h2v2H4zM7.5 11h2v2h-2z" fill="#d5e5ee" /><path d="M11 11h2v3h-2z" fill="#38a0e0" /></> },
  { id: "folder", run: true, body: <><path d="M0 2h6l2 2h8v11H0z" fill="#e9a92a" /><path d="M0 6h16v9H0z" fill="#fbd45c" /><path d="M3 11h10v4H3z" fill="#3a88d0" /></> },
  { id: "onenote", body: <><path d="M4 0h12v16H4z" fill="#b858d8" /><path d="M0 5h9v9H0z" fill="#7a22a0" /><path d="M2.5 12V7l4 5V7" fill="none" stroke="#fff" /></> },
  { id: "ai", text: "A\\", tile: "bg-[#f8f8f8] text-black" },
  { id: "claude", burst: true },
  { id: "revit", run: true, body: <><rect width="16" height="16" rx="2" fill="#1b65d8" /><path d="M5.5 10V3H9a2 2 0 010 4H5.5M9 7l2 3" fill="none" stroke="#fff" strokeWidth="1.5" /><path d="M4 13.5h8" stroke="#cde" strokeWidth="1.2" /></> },
  { id: "teams", run: true, badge: "8", body: <><circle cx="7" cy="4" r="3" fill="#7b83eb" /><path d="M3 6h12v9H3z" fill="#5b62c8" /><path d="M0 6h9v8H0z" fill="#3f48a8" /><path d="M2 8h5M4.5 8v5" stroke="#fff" strokeWidth="1.3" /></> },
  { id: "notepad", run: true, body: <><path d="M1 2h14v14H1z" fill="#35b5d8" /><path d="M1 1h14v3H1z" fill="#156f94" /><path d="M4 7h8M4 9.5h8M4 12h8" stroke="#155f80" /></> },
  { id: "word", run: true, body: <><path d="M3 0h12v16H3z" fill="#3a8ae8" /><path d="M3 8h12v8H3z" fill="#1b55b8" /><path d="M0 6h9v8H0z" fill="#143f98" /><path d="M2 8l1 4 1.5-3L6 12l1-4" fill="none" stroke="#fff" /></> },
  { id: "ppt", run: true, body: <><circle cx="9" cy="8" r="7.5" fill="#e8553a" /><path d="M9 0a8 8 0 017 8H9z" fill="#f59a78" /><path d="M0 6h9v8H0z" fill="#b02a20" /><path d="M3.5 13V8H5a1.5 1.5 0 010 3H3.5" fill="none" stroke="#fff" /></> },
  { id: "desktop", run: true, burst: true, box: true },
  { id: "revu", run: true, active: true, body: <><circle cx="8" cy="8" r="8" fill="#1497cf" /><path d="M5 15c-1-6 1-10 9-11M4 4c4-1 6 1 5 3s-3 1-3 2 3 3 4 5" fill="none" stroke="#fff" strokeWidth="1.8" /></> },
  { id: "pink", run: true, body: <><rect width="16" height="16" rx="2" fill="#e84a5c" /><path d="M4 3h6v7H4zM7 6h5v7H7z" fill="#e84a5c" stroke="#fff" strokeWidth="1.3" /></> },
  { id: "g", run: true, text: "G", tile: "bg-white text-black border-b-2 border-[#d8d84a]" },
];

function TaskIcon({ task }) {
  return (
    <div className="flex w-[29.4px] shrink-0 justify-center">
      <div
        className={clsx(
          "relative flex h-[28px] w-[25px] flex-col items-center rounded-[4px] pt-[6px]",
          task.active && "bg-[#f2f6f8]"
        )}
      >
        {task.text && (
          <div className={clsx("flex size-[15px] items-center justify-center rounded-[2px] text-[9px] font-bold", task.tile)}>
            {task.text}
          </div>
        )}
        {task.burst && (
          <div className={clsx("flex size-[15px] items-center justify-center rounded-[2px]", task.box && "bg-[#cf6a48]")}>
            {task.box ? <Burst className="size-[12px]" color="#fff" /> : <Burst className="size-[14px]" width={2} />}
          </div>
        )}
        {task.body && (
          <svg viewBox="0 0 16 16" className="size-[15px] overflow-visible">{task.body}</svg>
        )}
        {task.badge && (
          <span className="absolute right-0 top-[1px] flex size-[10px] items-center justify-center rounded-full bg-[#c4372c] text-[7.5px] text-white">
            {task.badge}
          </span>
        )}
        {task.run && (
          <div className={clsx("mt-[3px] h-[2px] rounded-full", task.active ? "w-[10px] bg-[#1272b4]" : "w-[5px] bg-[#8b8f94]")} />
        )}
      </div>
    </div>
  );
}

function Taskbar() {
  return (
    <div className="flex h-[32px] shrink-0 items-center bg-[#dfe0e2] font-['Open_Sans',sans-serif] text-[8.1px] text-[#222]">
      <div className="ml-[13px] size-[14px] rounded-full bg-linear-to-b from-[#f6b32e] to-[#f0781e]" />
      <div className="ml-[6.5px] w-[245px] leading-[10.5px]">
        <p>74°F</p>
        <p className="text-[#5c5c5c]">Sunny</p>
      </div>
      <svg viewBox="0 0 16 16" className="size-[16px]" fill="#1585d4">
        <path d="M0 0h7.6v7.6H0zM8.4 0H16v7.6H8.4zM0 8.4h7.6V16H0zM8.4 8.4H16V16H8.4z" />
      </svg>
      <div className="ml-[9px] flex h-[20px] w-[145px] items-center rounded-full bg-[#f3f4f5] pl-[7px] text-[9px] text-[#5c5c5c]">
        <Icon name="search" className="size-[10px] text-[#222]" sw={1.6} />
        <span className="ml-[7px]">Search</span>
      </div>
      <div className="flex pl-px">
        {TASKS.map((t) => (
          <TaskIcon key={t.id} task={t} />
        ))}
      </div>
      <div className="ml-auto pr-[13px] text-right leading-[10.5px]">
        <p>1:52 PM</p>
        <p>6/2/2026</p>
      </div>
    </div>
  );
}

export default function App() {
  return (
    <div className="relative flex h-[720px] w-[1280px] flex-col overflow-hidden bg-black">
      <div className="flex h-[688px] shrink-0">
        <RevuWindow />
        <ChatWindow />
      </div>
      <Taskbar />
      {/* overlay scrollbar of the conversation */}
      <div className="absolute left-[1275px] top-[541px] h-[138px] w-[4px] rounded-full bg-[#a9a9a5]" />
      <div className="absolute left-[1275px] top-[682px] size-0 border-x-[2px] border-t-[3px] border-x-transparent border-t-[#888]" />
    </div>
  );
}
